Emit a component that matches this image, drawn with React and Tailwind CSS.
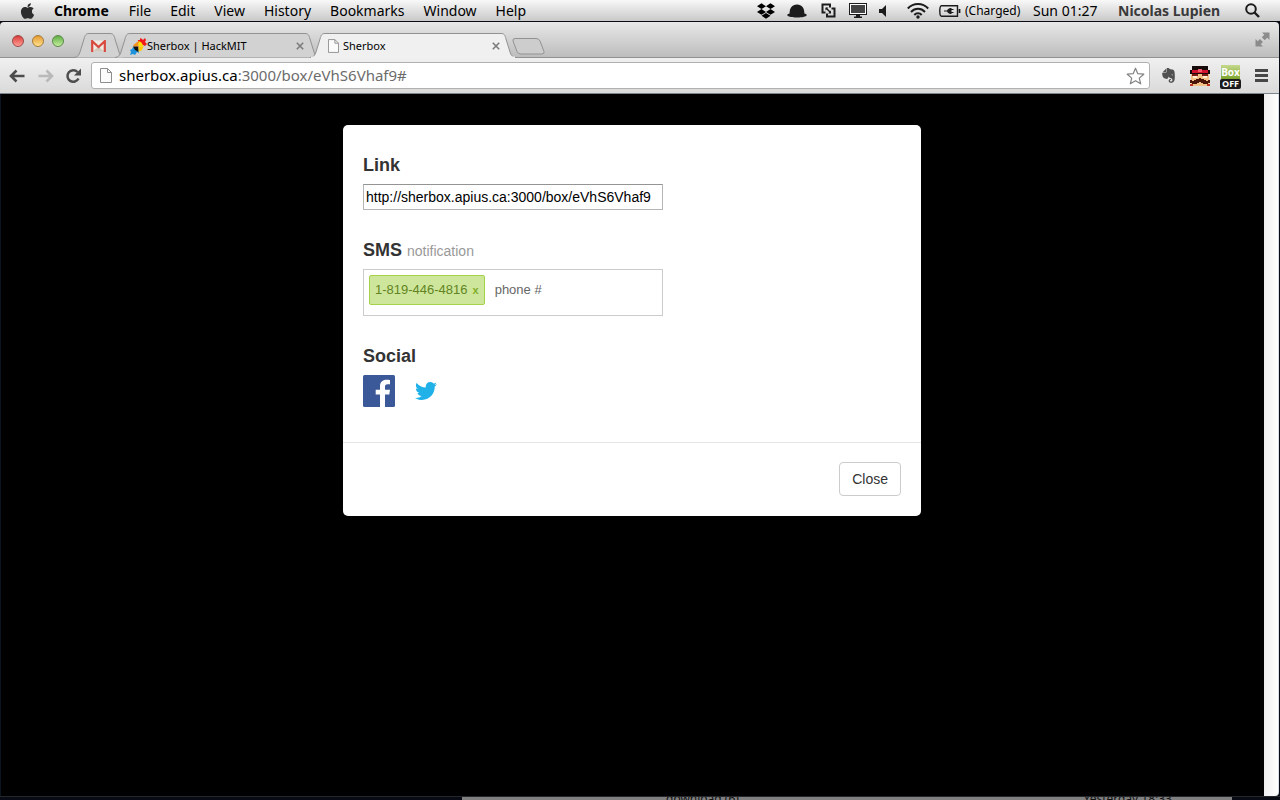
import { useState } from "react";
import { FaApple, FaDropbox, FaEvernote, FaTwitter } from "react-icons/fa";

const MENUS = ["File", "Edit", "View", "History", "Bookmarks", "Window", "Help"];

/////////////////////////////////////////////////////
function HatIcon() {
  return (
    <svg width="20" height="14" viewBox="0 0 20 14" fill="#1c1c1c">
      <path d="M2.600 9.500C2.600 4 5 .5 10 .5s7.400 3.500 7.400 9c.8.300 2.400.5 2.400 1.500 0 1.600-4.500 2.500-9.800 2.500S.2 12.600.2 11c0-1 1.600-1.200 2.400-1.500z" />
    </svg>
  );
}

function VmIcon() {
  return (
    <svg width="15" height="15" viewBox="0 0 15 15" fill="none" stroke="#1c1c1c" strokeWidth="2">
      <path d="M4.500 9.500H1.500V1.500H9V4.500" />
      <path d="M10.500 5.500h3v8H6V10.500" />
      <path d="M5 5l4.500 4.500" strokeWidth="1.400" />
      <path d="M4.500 4.500h3l-3 3zM10 10.500H7l3-3z" fill="#1c1c1c" stroke="none" />
    </svg>
  );
}

function DisplayIcon() {
  return (
    <svg width="18" height="15" viewBox="0 0 18 15">
      <rect x=".5" y=".5" width="17" height="11" fill="#fff" stroke="#1c1c1c" />
      <rect x="2" y="2" width="14" height="8" fill="#444" />
      <path d="M7 12h4v1.500h2V15H5v-1.500h2z" fill="#1c1c1c" />
    </svg>
  );
}

function SpeakerIcon() {
  return (
    <svg width="8" height="12" viewBox="0 0 8 12" fill="#1c1c1c">
      <path d="M0 4h3l4-4v12L3 8H0z" />
    </svg>
  );
}

function WifiIcon() {
  return (
    <svg width="22" height="16" viewBox="0 0 22 16" fill="none" stroke="#1c1c1c" strokeWidth="2">
      <path d="M.8 5.500C6.500-.4 15.500-.4 21.200 5.500M4 9C8 4.800 14 4.800 18 9M7.300 12c2-2.200 5.400-2.200 7.400 0" />
      <circle cx="11" cy="14" r="1.700" fill="#1c1c1c" stroke="none" />
    </svg>
  );
}

function BatteryIcon() {
  return (
    <svg width="22" height="12" viewBox="0 0 22 12" fill="none" stroke="#1c1c1c">
      <path d="M6 .8H2.500Q.8.800.8 6t1.700 5.200H6M6 .8h12.500v10.400H6" strokeWidth="1.400" />
      <path d="M20.500 4v4" strokeWidth="1.800" />
      <path d="M5 6h4M11 4.500h3.500M11 7.500h3.500" strokeWidth="1.200" />
      <path d="M12.500 3v6H11Q8 8 8 6t3-3z" fill="#1c1c1c" stroke="none" />
    </svg>
  );
}

function SearchIcon() {
  return (
    <svg width="15" height="15" viewBox="0 0 15 15" fill="none" stroke="#1c1c1c" strokeWidth="2">
      <circle cx="6" cy="6" r="4.800" />
      <path d="M9.500 9.500l4.500 4.500" strokeWidth="2.400" />
    </svg>
  );
}

function PageIcon({ className }) {
  return (
    <svg className={className} viewBox="0 0 12 15" fill="#fbfbfb" stroke="#8d8d8d">
      <path d="M.5.5h7l4 4v10H.5z" />
      <path d="M7.500.5v4h4" fill="none" />
    </svg>
  );
}

function GmailIcon() {
  return (
    <svg width="15" height="12" viewBox="0 0 15 12">
      <path d="M1 .5h13v11H1z" fill="#efe9e2" />
      <path d="M2 11.500l5.500-5 5.500 5z" fill="#cfc8bd" />
      <path d="M1.200 12V1.200L7.500 7l6.300-5.800V12" fill="none" stroke="#d8483e" strokeWidth="2.200" />
    </svg>
  );
}

function HackIcon() {
  return (
    <svg width="17" height="17" viewBox="0 0 17 17">
      <path d="M8 2l2 0 0-2 2 1 1 1 2-2 1 2-1 2 2 2-2 2-2-1-5-2z" fill="#f01818" />
      <path d="M9 15l-2-1-2 3-2-1-3 1 1-3-1-2 2-1 1-2 2 1 4 1z" fill="#1d93dc" />
      <path d="M4 6.500L8.500 3v5.500H3z" fill="#f5921e" />
      <path d="M8.500 3l3 1.500 2 4h-5z" fill="#ffe000" />
      <path d="M3 8.500h5.500V14L5 12z" fill="#111" />
      <path d="M8.500 8.500h5L12 12l-3.500 2z" fill="#ffc800" />
    </svg>
  );
}

function MustacheIcon() {
  return (
    <svg width="20" height="20" viewBox="0 0 20 20" shapeRendering="crispEdges">
      <path d="M2 0h16v4h2v4H0V4h2z" fill="#160b0b" />
      <path d="M2 4h16v3H2z" fill="#d3122f" />
      <path d="M8 3h4v3H8z" fill="#f25a6d" />
      <path d="M1 8h18v12H1z" fill="#f3c187" />
      <path d="M2 8h6v2H2zM12 8h6v2h-6z" fill="#7a1a14" />
      <path d="M3 10h4v2H3zM13 10h4v2h-4z" fill="#fff1d4" />
      <path d="M9 12h2v1h3v1h2v1h2v-1h2v3h-2v1h-5v-1h-2v-1H9v1H7v1H2v-1H0v-3h2v1h2v-1h2v-1h3z" fill="#4a1508" />
      <path d="M0 18h3v2H0zM17 18h3v2h-3z" fill="#c2301f" />
    </svg>
  );
}

function CloseX() {
  return (
    <svg width="8" height="8" viewBox="0 0 8 8" stroke="#7b7b7b" strokeWidth="1.600">
      <path d="M.8.800l6.400 6.400M7.200.8L.8 7.200" />
    </svg>
  );
}

/////////////////////////////////////////////////////
function Tab({ width, active, title, className = "", children }) {
  const side = `C4 24 5 22 6 19L10 6C11 2 12 .5 15 .5H${width - 15}C${width - 12} .5 ${width - 11} 2 ${width - 10} 6L${width - 6} 19C${width - 5} 22 ${width - 4} 24 ${width} 24.5`;
  return (
    <div className={`relative h-[25px] shrink-0 ${active ? "z-10" : ""} ${className}`} style={{ width }}>
      <svg className="absolute inset-0" width={width} height="25" viewBox={`0 0 ${width} 25`}>
        <path d={`M0 24.500${side}`} fill={active ? "#f0f0f0" : "#d2d2d2"} stroke="#929292" />
        {active && <path d={`M1 24.500H${width - 1}`} stroke="#f0f0f0" strokeWidth="2" />}
      </svg>
      <div className="relative flex h-full items-center pt-px">
        <button aria-label={title} className="flex min-w-0 flex-1 items-center text-left text-[11px] text-black">
          {children}
        </button>
        {width > 60 && (
          <button aria-label={`Close ${title}`} className="mr-[16px]">
            <CloseX />
          </button>
        )}
      </div>
    </div>
  );
}

function MenuBar() {
  return (
    <div className="flex h-[22px] shrink-0 items-center border-b border-[#0b0b14] bg-gradient-to-b from-[#f8f8f8] to-[#c9c9c9] pl-[19px] pr-[20px] text-[14px] text-black">
      <FaApple className="w-[17px] text-[18px] text-[#2d2d2d]" />
      <nav className="flex flex-1 items-center gap-[19px] pl-[18px]">
        <button className="pr-px font-bold">Chrome</button>
        {MENUS.map((m) => (
          <button key={m}>{m}</button>
        ))}
      </nav>
      <div className="flex items-center">
        <FaDropbox className="mr-[12px] text-[18px]" />
        <HatIcon />
        <span className="w-[14px]" />
        <VmIcon />
        <span className="w-[13px]" />
        <DisplayIcon />
        <span className="w-[12px]" />
        <SpeakerIcon />
        <span className="w-[20px]" />
        <WifiIcon />
        <span className="w-[10px]" />
        <BatteryIcon />
        <span className="ml-[4px] w-[58px] text-[12px] whitespace-nowrap">(Charged)</span>
        <span className="ml-[10px] w-[70px] whitespace-nowrap">Sun 01:27</span>
        <span className="ml-[15px] w-[106px] font-bold whitespace-nowrap text-[#3a3a3a]">Nicolas Lupien</span>
        <button aria-label="Search" className="ml-[21px]">
          <SearchIcon />
        </button>
      </div>
    </div>
  );
}

function TabStrip() {
  return (
    <div className="flex h-[36px] items-end rounded-t border-b border-[#929292] bg-gradient-to-b from-[#e8e8e8] to-[#bdbdbd] pl-[12px]">
      <div className="flex gap-2 self-start pt-[13px]">
        <button aria-label="Close window" className="h-3 w-3 rounded-full border border-[#9c4a48] bg-gradient-to-b from-[#d8383b] to-[#ff9c94]" />
        <button aria-label="Minimize" className="h-3 w-3 rounded-full border border-[#a67a3a] bg-gradient-to-b from-[#e39a2c] to-[#ffe28c]" />
        <button aria-label="Zoom" className="h-3 w-3 rounded-full border border-[#5d8a49] bg-gradient-to-b from-[#5eae44] to-[#c4ee9c]" />
      </div>
      <div className="-mb-px flex flex-1 items-end pl-[10px]">
        <Tab width={51} title="Gmail">
          <span className="pl-[17px]">
            <GmailIcon />
          </span>
        </Tab>
        <Tab width={205} title="Sherbox | HackMIT" className="-ml-[10px]">
          <span className="pl-[15px]">
            <HackIcon />
          </span>
          <span>Sherbox | HackMIT</span>
        </Tab>
        <Tab width={206} active title="Sherbox" className="-ml-[10px]">
          <PageIcon className="ml-[18px] mr-1 h-[14px] w-[11px]" />
          <span>Sherbox</span>
        </Tab>
        <button aria-label="New tab" className="-ml-[4px] mb-[3px]">
          <svg width="33" height="17" viewBox="0 0 33 17">
            <path d="M3 .5H24Q27 .5 28 3L32 13.500Q32.500 16 30 16H9Q6 16 5 13.500L1 3Q.5.500 3 .5z" fill="#cdcdcd" stroke="#929292" />
          </svg>
        </button>
      </div>
      <button aria-label="Full screen" className="mr-[9px] self-start pt-[10px]">
        <svg width="15" height="15" viewBox="0 0 15 15" fill="#8b8b8b">
          <path d="M7 .5h7.500V8l-2.300-2.300-2.500 2.500L6.800 5.300l2.500-2.500zM.5 7l2.300 2.300 2.200-2.200L7.900 10l-2.200 2.200L8 14.500H.5z" />
        </svg>
      </button>
    </div>
  );
}

function Toolbar() {
  return (
    <div className="flex h-[36px] items-center border-b border-[#7d858c] bg-gradient-to-b from-[#f0f0f0] to-[#dadada] pl-[9px] pr-[11px]">
      <button aria-label="Back">
        <svg width="16" height="14" viewBox="0 0 16 14" fill="none" stroke="#4c4c4c" strokeWidth="2.600">
          <path d="M7.500 1.500L2 7l5.500 5.500M2 7h13.500" />
        </svg>
      </button>
      <button aria-label="Forward" className="ml-[13px]" disabled>
        <svg width="16" height="14" viewBox="0 0 16 14" fill="none" stroke="#b9b9b9" strokeWidth="2.600">
          <path d="M8.500 1.500L14 7l-5.500 5.500M14 7H.5" />
        </svg>
      </button>
      <button aria-label="Reload" className="ml-[11px]">
        <svg width="17" height="16" viewBox="0 0 17 16" fill="none" stroke="#4c4c4c" strokeWidth="2.500">
          <path d="M13.500 10.500A5.800 5.800 0 1 1 12.500 4" />
          <path d="M16 .5v7H9z" fill="#4c4c4c" stroke="none" />
        </svg>
      </button>
      <div className="ml-[9px] flex h-[27px] flex-1 items-center rounded-[3px] border border-[#b0b0b0] bg-white pl-[8px] pr-[4px]">
        <PageIcon className="h-[15px] w-[12px]" />
        <div role="textbox" aria-label="Address" className="flex-1 pl-[7px] text-[15px] whitespace-nowrap text-[#6b6b6b]">
          <span className="text-black">sherbox.apius.ca</span>:3000/box/eVhS6Vhaf9#
        </div>
        <button aria-label="Bookmark this page">
          <svg width="19" height="18" viewBox="0 0 19 18" fill="#fff" stroke="#828282" strokeWidth="1.200">
            <path d="M9.500 1.200l2.300 5.500 6 .5-4.500 3.900 1.400 5.700-5.200-3-5.200 3 1.400-5.700-4.500-3.900 6-.5z" strokeLinejoin="round" />
          </svg>
        </button>
      </div>
      <button aria-label="Evernote" className="ml-[11px]">
        <FaEvernote className="w-[15px] text-[17px] text-[#505050]" />
      </button>
      <button aria-label="Mustache" className="ml-[14px]">
        <MustacheIcon />
      </button>
      <button aria-label="Box off" className="ml-[10px] pt-[3px] w-[21px] text-center font-['Open_Sans',sans-serif] font-bold text-white">
        <span className="mx-px block h-[14px] bg-gradient-to-b from-[#c5d98c] to-[#7ba428] text-[10px] leading-[14px]">Box</span>
        <span className="block h-[10px] rounded-[2px] bg-[#1b1b1b] text-[9px] leading-[10px]">OFF</span>
      </button>
      <button aria-label="Menu" className="ml-[14px]">
        <svg width="13" height="13" viewBox="0 0 13 13" fill="#474747">
          <path d="M0 0h13v3H0zM0 5h13v3H0zM0 10h13v3H0z" />
        </svg>
      </button>
    </div>
  );
}

/////////////////////////////////////////////////////
function ShareDialog() {
  const [phones, setPhones] = useState(["1-819-446-4816"]);
  const [phone, setPhone] = useState("");

  const addPhone = (e) => {
    if (e.key !== "Enter" || !phone.trim()) return;
    setPhones([...phones, phone.trim()]);
    setPhone("");
  };

  return (
    <div role="dialog" aria-label="Share box" className="w-[578px] rounded-[5px] bg-white font-['Liberation_Sans',Arial,sans-serif] text-[#333]">
      <div className="p-5 pb-[35px]">
        <label htmlFor="link" className="mt-[10px] block text-[18px] leading-5 font-bold">
          Link
        </label>
        <input
          id="link"
          readOnly
          value="http://sherbox.apius.ca:3000/box/eVhS6Vhaf9"
          className="mt-[9px] block h-[26px] w-[300px] border border-[#b5b5b5] border-t-[#949494] px-[2px] text-[14px] text-black outline-none"
        />

        <label htmlFor="phone" className="mt-[30px] block text-[18px] leading-5 font-bold">
          SMS <span className="text-[14px] leading-4 font-normal text-[#999]">notification</span>
        </label>
        <div className="mt-[9px] flex min-h-[47px] w-[300px] flex-wrap items-start border border-[#ccc] p-[5px] text-[13px]">
          {phones.map((p) => (
            <span key={p} className="mr-[5px] mb-[5px] flex h-[30px] items-center gap-[5px] rounded-[2px] border border-[#a5d24a] bg-[#cde69c] px-[5px] text-[#638421]">
              {p}
              <button
                aria-label={`Remove ${p}`}
                onClick={() => setPhones(phones.filter((x) => x !== p))}
                className="text-[11px] font-bold text-[#82ad2b]"
              >
                x
              </button>
            </span>
          ))}
          <input
            id="phone"
            value={phone}
            onChange={(e) => setPhone(e.target.value)}
            onKeyDown={addPhone}
            placeholder="phone #"
            className="h-[29px] w-[80px] px-[5px] outline-none placeholder:text-[#666]"
          />
        </div>

        <h4 className="mt-[30px] text-[18px] leading-5 font-bold">Social</h4>
        <div className="mt-[9px] flex items-center gap-[20px]">
          <a href="#facebook" aria-label="Facebook">
            <svg width="32" height="32" viewBox="0 0 32 32">
              <rect width="32" height="32" rx="1.500" fill="#3b5998" />
              <path d="M22 32V19.500h4.300l.7-4.800h-5v-3c0-1.500.5-2.400 2.500-2.400H27V5c-.6-.1-2-.2-3.600-.2-3.800 0-6.400 2.200-6.400 6.400v3.500h-4.300v4.800H17V32z" fill="#fff" />
            </svg>
          </a>
          <a href="#twitter" aria-label="Twitter" className="text-[22px] text-[#1fb1e8]">
            <FaTwitter />
          </a>
        </div>
      </div>
      <div className="flex justify-end border-t border-[#e5e5e5] px-5 pt-[19px] pb-5">
        <button className="h-[34px] rounded border border-[#ccc] bg-white px-3 text-[14px]">Close</button>
      </div>
    </div>
  );
}

export default function App() {
  return (
    <div className="flex h-screen flex-col overflow-hidden bg-[#080b14] font-['Noto_Sans',sans-serif]">
      <MenuBar />
      <div className="mr-px flex min-h-0 flex-1 flex-col">
        <TabStrip />
        <Toolbar />
        <div className="flex min-h-0 flex-1 border-l border-[#0b1420]">
          <main className="flex flex-1 items-start justify-center bg-black pt-[31px] pr-px">
            <ShareDialog />
          </main>
          <div className="w-[15px] rounded-br border-r border-[#d5dde6] bg-gradient-to-r from-[#eeeeee] to-white" />
        </div>
      </div>
      {/* Strip of the window behind */}
      <div className="flex h-1 shrink-0 overflow-hidden border-t border-[#23272b] pl-[462px] pr-[48px] text-[12px] leading-3 text-[#111]">
        <div className="flex flex-1 justify-between bg-[#808080] pr-[60px] pl-[204px]">
          <span className="-mt-[4px]">download (6)</span>
          <span className="-mt-[4px]">Yesterday 18:33</span>
        </div>
      </div>
    </div>
  );
}
